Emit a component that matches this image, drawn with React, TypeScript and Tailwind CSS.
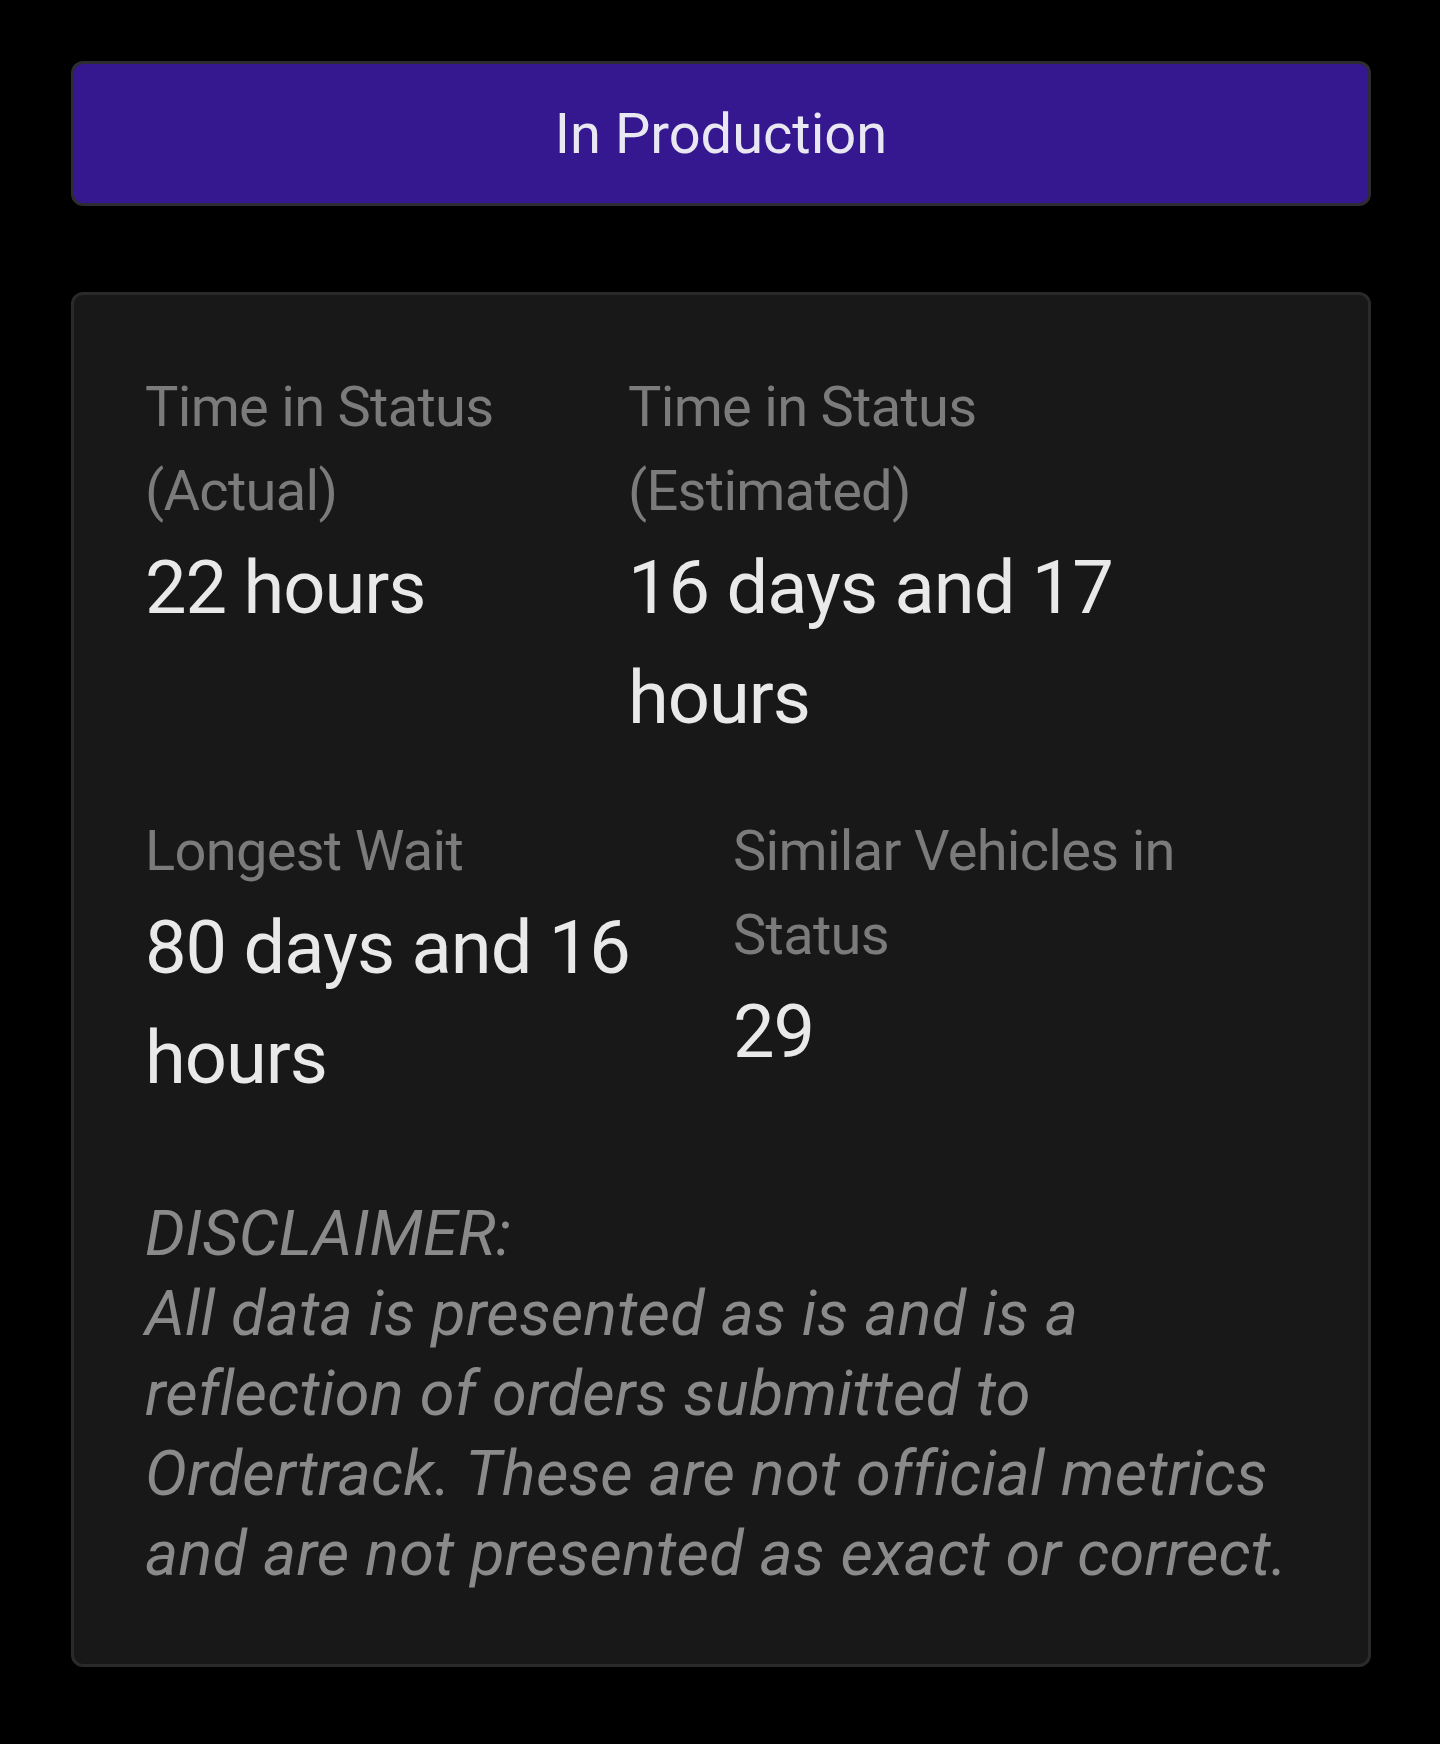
import React from "react";

type Stat = { label: string; value: string; width: string };

const ROWS: ReadonlyArray<ReadonlyArray<Stat>> = [
  [
    { label: "Time in Status (Actual)", value: "22 hours", width: "w-[483px]" },
    { label: "Time in Status (Estimated)", value: "16 days and 17 hours", width: "w-[560px]" },
  ],
  [
    { label: "Longest Wait", value: "80 days and 16 hours", width: "w-[588px]" },
    { label: "Similar Vehicles in Status", value: "29", width: "w-[540px]" },
  ],
];

const StatBlock = ({ stat }: { stat: Stat }) => (
  <div className={`${stat.width} shrink-0 flex flex-col`}>
    <span className="text-[56px] leading-[84px] tracking-[-0.7px] text-[#7b7b7b]">{stat.label}</span>
    <span className="text-[74px] leading-[110px] tracking-[-1px] text-[#e9e9e9]">{stat.value}</span>
  </div>
);

export default function App() {
  return (
    <div className="min-h-screen bg-black pl-[71px] pr-[69px] pt-[61px] pb-[79px] font-['Roboto',sans-serif]">
      <div className="flex h-[145px] items-center justify-center rounded-[12px] border-[3px] border-[#2d2c33] bg-[#351890]">
        <span className="text-[56px] text-[#e9e7f1]">In Production</span>
      </div>

      <div className="mt-[86px] flex flex-col rounded-[12px] border-[3px] border-[#2a2a2c] bg-[#181818] px-[71px] pt-[70px] pb-[70px]">
        <div className="flex flex-col gap-[56px]">
          {ROWS.map((row, i) => (
            <div key={i} className="flex items-start">
              {row.map((s) => (
                <StatBlock key={s.label} stat={s} />
              ))}
            </div>
          ))}
        </div>

        <p className="mt-[81px] text-[63px] leading-[80px] italic tracking-[0.25px] text-[#8a8a8a]">
          DISCLAIMER:
          <br />
          All data is presented as is and is a reflection of orders submitted to Ordertrack. These are not
          official metrics and are not presented as exact or correct.
        </p>
      </div>
    </div>
  );
}
